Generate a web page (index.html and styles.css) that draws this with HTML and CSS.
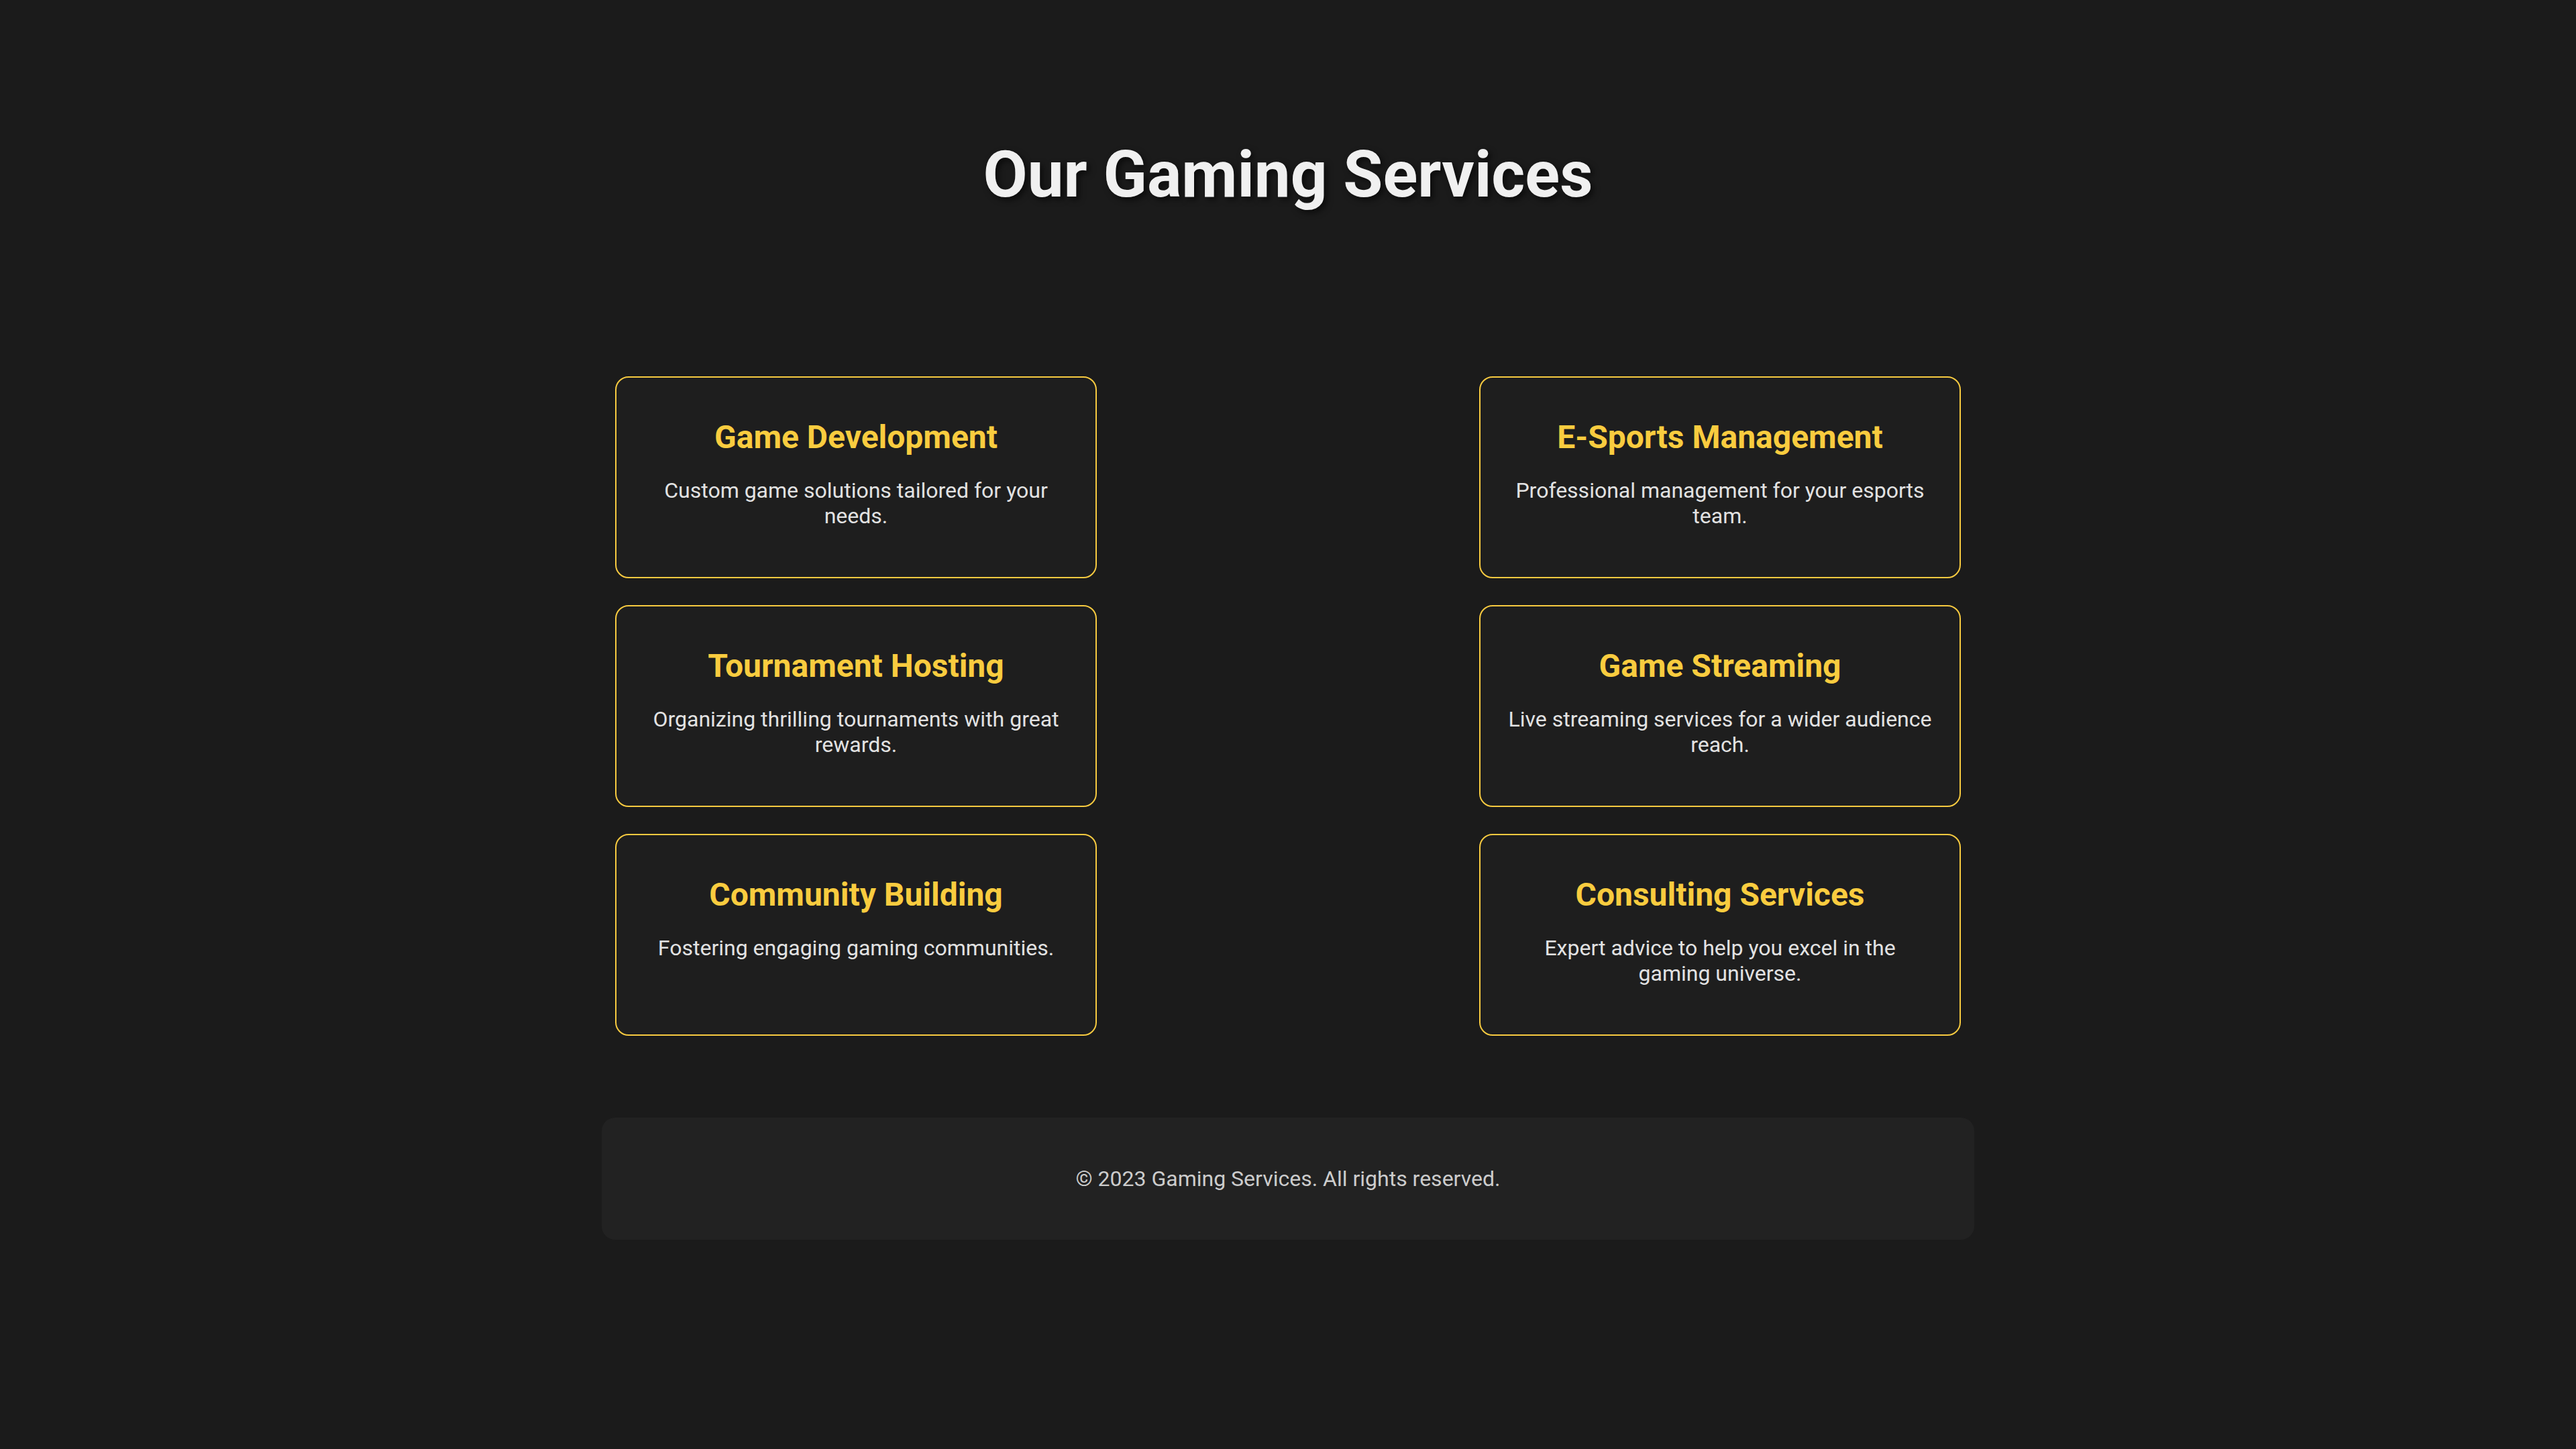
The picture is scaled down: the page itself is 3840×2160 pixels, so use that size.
FILE: index.html
```html
<!DOCTYPE html>
<html lang="en">
<head>
<meta charset="utf-8">
<title>Our Gaming Services</title>
<link rel="stylesheet" href="styles.css">
</head>
<body>
<header class="page-header">
  <h1 class="page-title">Our Gaming Services</h1>
</header>
<main class="services">
  <div class="service-grid">
    <div class="service-card">
      <h2 class="service-title">Game Development</h2>
      <p class="service-text">Custom game solutions tailored for your needs.</p>
    </div>
    <div class="service-card">
      <h2 class="service-title">E-Sports Management</h2>
      <p class="service-text">Professional management for your esports team.</p>
    </div>
    <div class="service-card">
      <h2 class="service-title">Tournament Hosting</h2>
      <p class="service-text">Organizing thrilling tournaments with great rewards.</p>
    </div>
    <div class="service-card">
      <h2 class="service-title">Game Streaming</h2>
      <p class="service-text">Live streaming services for a wider audience reach.</p>
    </div>
    <div class="service-card">
      <h2 class="service-title">Community Building</h2>
      <p class="service-text">Fostering engaging gaming communities.</p>
    </div>
    <div class="service-card">
      <h2 class="service-title">Consulting Services</h2>
      <p class="service-text">Expert advice to help you excel in the gaming universe.</p>
    </div>
  </div>
</main>
<footer class="page-footer">
  <p class="footer-text">&copy; 2023 Gaming Services. All rights reserved.</p>
</footer>
</body>
</html>
```
FILE: styles.css
```css
* { box-sizing: border-box; }

body {
  margin: 0;
  background: #1b1b1b;
  color: #e0e0e0;
  font-family: Roboto, "Noto Sans", "Liberation Sans", sans-serif;
}

.page-header {
  padding-top: 204px;
  text-align: center;
}

.page-title {
  margin: 0;
  font-size: 96px;
  font-weight: 700;
  line-height: normal;
  color: #f0f0f0;
  text-shadow: 4px 4px 10px rgba(0, 0, 0, 0.6);
}

.services {
  width: 2046px;
  margin: 245px auto 0;
  padding: 0 20px;
}

.service-grid {
  display: grid;
  grid-template-columns: 718px 718px;
  justify-content: space-between;
  row-gap: 40px;
}

.service-card {
  background: #1e1e1e;
  border: 2px solid #f7ca40;
  border-radius: 20px;
  padding: 40px;
  text-align: center;
}

.service-title {
  margin: 20px 0 32px;
  font-size: 48px;
  font-weight: 700;
  line-height: normal;
  color: #f9cc3f;
}

.service-text {
  margin: 32px 0;
  font-size: 32px;
  line-height: normal;
  color: #e2e2e2;
}

.page-footer {
  width: 2046px;
  margin: 122px auto 0;
  padding: 40px;
  background: #222222;
  border-radius: 20px;
  text-align: center;
}

.footer-text {
  margin: 32px 0;
  font-size: 32px;
  line-height: normal;
  color: #cccccc;
}
```
